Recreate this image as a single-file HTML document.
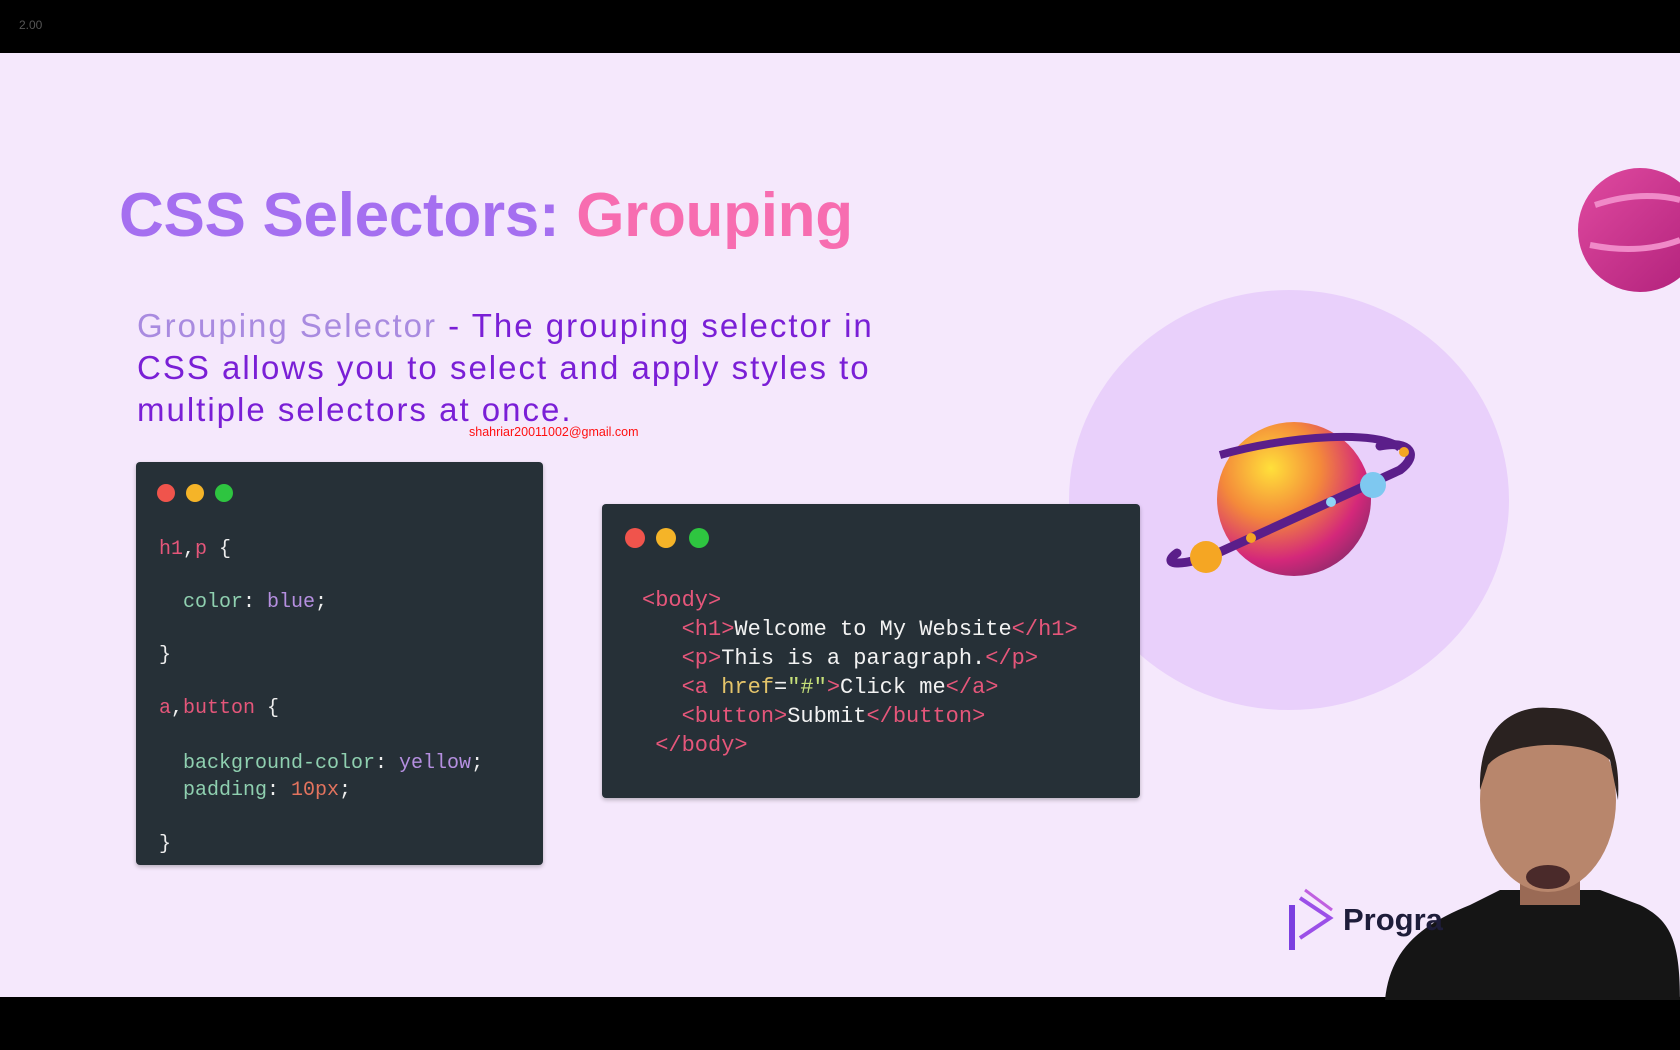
<!DOCTYPE html>
<html><head><meta charset="utf-8"><style>
*{margin:0;padding:0;box-sizing:border-box}
body{width:1680px;height:1050px;background:#f5e8fc;position:relative;overflow:hidden;font-family:"Liberation Sans",sans-serif}
.bar{position:absolute;left:0;width:1680px;background:#000}
.abs{position:absolute;white-space:pre}
.panel{position:absolute;background:#263037;border-radius:4px;box-shadow:0 2px 4px rgba(0,0,0,.25)}
.dot{position:absolute;border-radius:50%}
.mono{font-family:"Liberation Mono",monospace;color:#eee}
.t{color:#e5567a}.w{color:#f2f2f2}.y{color:#e4c46a}.g{color:#c6e07a}.pr{color:#8fd0b0}.v{color:#b58fe0}.n{color:#e3735e}
</style></head><body>
<div class="bar" style="top:0;height:53px"></div>
<div class="abs" style="left:19px;top:18px;color:#555;font-size:12px">2.00</div>
<div class="bar" style="top:997px;height:53px"></div>

<div class="abs" style="left:119px;top:180px;font-size:62px;font-weight:bold;color:#a56ff0;letter-spacing:-0.3px">CSS Selectors: <span style="color:#f76db0">Grouping</span></div>

<div class="abs" style="left:137px;top:305px;font-size:33px;line-height:42px;color:#7a1fd6;letter-spacing:2px"><span style="color:#a98be0">Grouping Selector</span> - The grouping selector in
CSS allows you to select and apply styles to
multiple selectors at once.</div>
<div class="abs" style="left:469px;top:425px;font-size:12.5px;color:#ff1010">shahriar20011002@gmail.com</div>

<div class="panel" style="left:136px;top:462px;width:407px;height:403px"></div>
<div class="dot" style="left:157px;top:484px;width:18px;height:18px;background:#f0544c"></div>
<div class="dot" style="left:186px;top:484px;width:18px;height:18px;background:#f5b428"></div>
<div class="dot" style="left:215px;top:484px;width:18px;height:18px;background:#2ec540"></div>
<div class="abs mono" style="left:159px;top:538px;font-size:20px"><span class="t">h1</span>,<span class="t">p</span> {</div>
<div class="abs mono" style="left:183px;top:591px;font-size:20px"><span class="pr">color</span>: <span class="v">blue</span>;</div>
<div class="abs mono" style="left:159px;top:644px;font-size:20px">}</div>
<div class="abs mono" style="left:159px;top:697px;font-size:20px"><span class="t">a</span>,<span class="t">button</span> {</div>
<div class="abs mono" style="left:183px;top:752px;font-size:20px"><span class="pr">background-color</span>: <span class="v">yellow</span>;</div>
<div class="abs mono" style="left:183px;top:779px;font-size:20px"><span class="pr">padding</span>: <span class="n">10px</span>;</div>
<div class="abs mono" style="left:159px;top:833px;font-size:20px">}</div>

<div style="position:absolute;left:1069px;top:290px;width:440px;height:420px;border-radius:50%;background:#e9d0fb"></div>

<div class="panel" style="left:602px;top:504px;width:538px;height:294px"></div>
<div class="dot" style="left:625px;top:528px;width:20px;height:20px;background:#f0544c"></div>
<div class="dot" style="left:656px;top:528px;width:20px;height:20px;background:#f5b428"></div>
<div class="dot" style="left:689px;top:528px;width:20px;height:20px;background:#2ec540"></div>
<div class="abs mono" style="left:642px;top:586px;font-size:22px;line-height:29px"><span class="t">&lt;body&gt;</span>
   <span class="t">&lt;h1&gt;</span><span class="w">Welcome to My Website</span><span class="t">&lt;/h1&gt;</span>
   <span class="t">&lt;p&gt;</span><span class="w">This is a paragraph.</span><span class="t">&lt;/p&gt;</span>
   <span class="t">&lt;a </span><span class="y">href</span><span class="w">=</span><span class="g">"#"</span><span class="t">&gt;</span><span class="w">Click me</span><span class="t">&lt;/a&gt;</span>
   <span class="t">&lt;button&gt;</span><span class="w">Submit</span><span class="t">&lt;/button&gt;</span>
 <span class="t">&lt;/body&gt;</span></div>

<svg style="position:absolute;left:0;top:0" width="1680" height="1050">
 <defs>
  <radialGradient id="pl" cx="0.35" cy="0.3" r="0.8"><stop offset="0" stop-color="#ffe03a"/><stop offset="0.4" stop-color="#f48a3a"/><stop offset="0.75" stop-color="#d4287a"/><stop offset="1" stop-color="#8a2a6a"/></radialGradient>
  <linearGradient id="pk" x1="0" y1="0" x2="1" y2="1"><stop offset="0" stop-color="#e04aa0"/><stop offset="1" stop-color="#b0207a"/></linearGradient>
 </defs>
 <circle cx="1294" cy="499" r="77" fill="url(#pl)"/>
 <path d="M1177 553 C1160 565 1180 568 1220 552 L1400 470 C1420 455 1410 440 1380 446" fill="none" stroke="#5b1e8a" stroke-width="9" stroke-linecap="round"/>
 <path d="M1220 455 C1290 435 1380 430 1400 448" fill="none" stroke="#5b1e8a" stroke-width="8"/>
 <circle cx="1373" cy="485" r="13" fill="#7ec8f0"/>
 <circle cx="1206" cy="557" r="16" fill="#f5a623"/>
 <circle cx="1331" cy="502" r="5" fill="#8fd4f5"/>
 <circle cx="1251" cy="538" r="5" fill="#f5a623"/>
 <circle cx="1404" cy="452" r="5" fill="#f5a623"/>
 <circle cx="1640" cy="230" r="62" fill="url(#pk)"/>
 <path d="M1595 205 Q1640 190 1680 200 M1590 245 Q1640 255 1680 240" stroke="#f08ac8" stroke-width="6" fill="none"/>
 <path d="M1385 1000 C1390 950 1420 925 1470 905 L1500 890 L1600 890 L1640 905 C1670 920 1680 940 1680 1000 Z" fill="#151515"/>
 <rect x="1520" y="860" width="60" height="45" fill="#9a6a55"/>
 <ellipse cx="1548" cy="800" rx="68" ry="92" fill="#b8866c"/>
 <path d="M1480 790 C1478 720 1520 705 1550 708 C1590 708 1622 730 1618 800 L1610 760 C1590 740 1510 738 1488 765 Z" fill="#2a2220"/>
 <ellipse cx="1548" cy="877" rx="22" ry="12" fill="#4a2a2a"/>
 <path d="M1292 905 L1292 950" stroke="#7b3fe0" stroke-width="6"/>
 <path d="M1300 898 L1330 918 L1300 938" fill="none" stroke="#9b4fe8" stroke-width="4"/>
 <path d="M1305 890 L1332 910" stroke="#c060e0" stroke-width="3"/>
</svg>
<div class="abs" style="left:1343px;top:902px;font-size:31px;font-weight:bold;color:#1e1d3a">Progra</div>
</body></html>
